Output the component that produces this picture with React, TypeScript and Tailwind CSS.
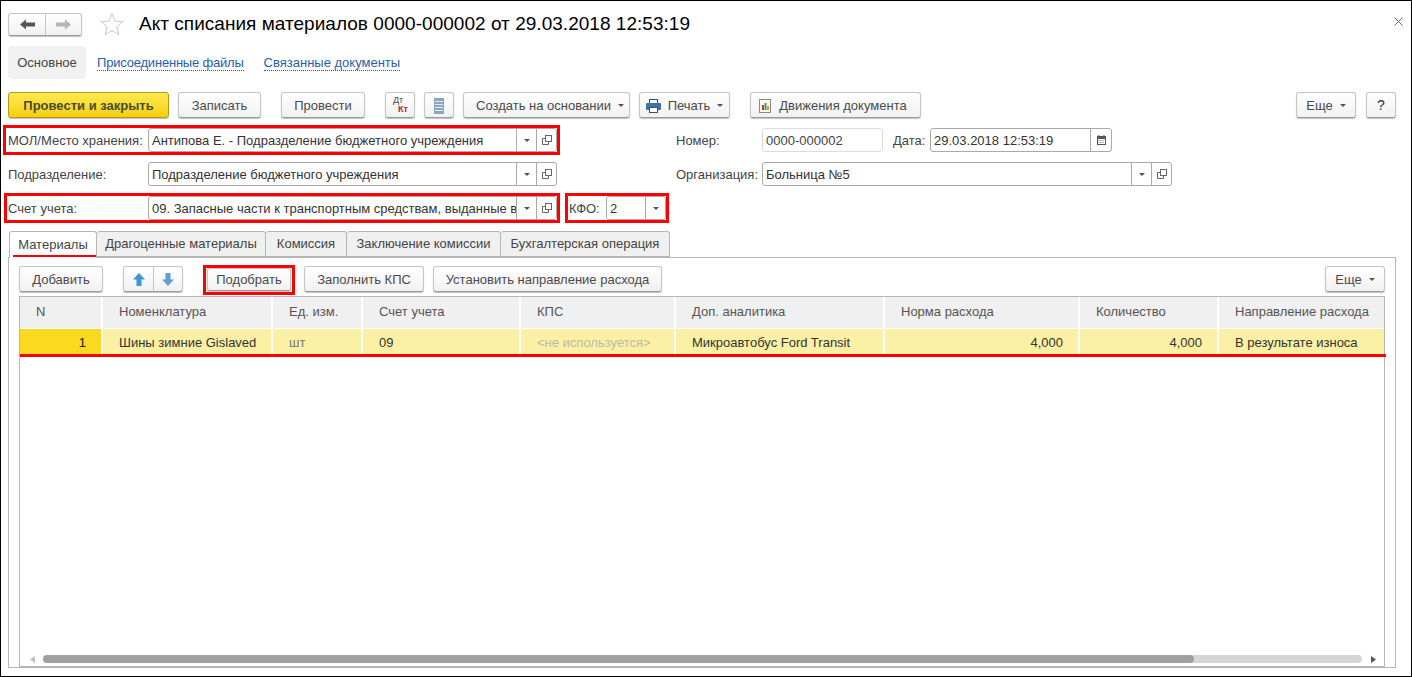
import React from "react";

const btnBase =
  "flex h-[26px] shrink-0 items-center justify-center rounded-[3px] border border-[#c4c4c4] border-b-[#9a9a9a] bg-gradient-to-b from-white to-[#f1f1f1] pt-[1px] text-[#4a4a4a] shadow-[0_1px_1px_rgba(0,0,0,0.25)]";

const Caret = ({ className = "" }: { className?: string }) => (
  <svg width="6" height="3" viewBox="0 0 6 3" className={className}>
    <path d="M0 0h6L3 3z" fill="#555" />
  </svg>
);

const OpenIcon = () => (
  <svg width="10" height="10" viewBox="0 0 10 10" fill="none" stroke="#666">
    <rect x="3.5" y="0.5" width="6" height="6" />
    <path d="M3.5 3.5H0.5V9.5H6.5V6.5" />
  </svg>
);

const CalendarIcon = () => (
  <svg width="9" height="10" viewBox="0 0 9 10">
    <rect x="0.5" y="1.5" width="8" height="8" fill="white" stroke="#555" />
    <rect x="0" y="1" width="9" height="3" fill="#555" />
    <path d="M2 0v2M7 0v2" stroke="#555" />
    <path d="M1.5 5.5h6M1.5 7.5h6" stroke="#777" strokeDasharray="1 1" />
  </svg>
);

const Field = ({
  text,
  className,
  caret = true,
  open = true,
  calendar = false,
}: {
  text: string;
  className: string;
  caret?: boolean;
  open?: boolean;
  calendar?: boolean;
}) => (
  <div className={`flex h-6 min-w-0 items-center rounded-[3px] border border-[#aaaaaa] bg-white ${className}`}>
    <span className="min-w-0 flex-1 overflow-hidden pl-[3px] pt-[1px] whitespace-nowrap text-[#333]">{text}</span>
    {calendar && (
      <div className="flex h-full w-[21px] shrink-0 items-center justify-center border-l border-[#aaaaaa]">
        <CalendarIcon />
      </div>
    )}
    {caret && (
      <div className="flex h-full w-[20px] shrink-0 items-center justify-center border-l border-[#aaaaaa]">
        <Caret />
      </div>
    )}
    {open && (
      <div className="flex h-full w-[20px] shrink-0 items-center justify-center border-l border-[#aaaaaa]">
        <OpenIcon />
      </div>
    )}
  </div>
);

const columns = [
  { title: "N", value: "1", width: "w-[83px]", head: "pl-[16px]", cell: "justify-end pr-[15px] bg-[#fbd91e] text-[#222]" },
  { title: "Номенклатура", value: "Шины зимние Gislaved", width: "w-[170px]", head: "pl-[16px]", cell: "pl-[16px]" },
  { title: "Ед. изм.", value: "шт", width: "w-[90px]", head: "pl-[16px]", cell: "pl-[16px] text-[#777]" },
  { title: "Счет учета", value: "09", width: "w-[158px]", head: "pl-[16px]", cell: "pl-[16px]" },
  { title: "КПС", value: "<не используется>", width: "w-[155px]", head: "pl-[16px]", cell: "pl-[16px] text-[#bbb9a8]" },
  { title: "Доп. аналитика", value: "Микроавтобус Ford Transit", width: "w-[209px]", head: "pl-[16px]", cell: "pl-[16px]" },
  { title: "Норма расхода", value: "4,000", width: "w-[195px]", head: "pl-[16px]", cell: "justify-end pr-[15px]" },
  { title: "Количество", value: "4,000", width: "w-[139px]", head: "pl-[16px]", cell: "justify-end pr-[15px]" },
  { title: "Направление расхода", value: "В результате износа", width: "flex-1", head: "pl-[16px]", cell: "pl-[16px]" },
];

const tabs = [
  { label: "Драгоценные материалы", width: "w-[169px]" },
  { label: "Комиссия", width: "w-[81px]" },
  { label: "Заключение комиссии", width: "w-[154px]" },
  { label: "Бухгалтерская операция", width: "w-[169px]" },
];

export default function App() {
  return (
    <div className="relative h-[677px] w-[1412px] overflow-hidden border border-black bg-white font-['Liberation_Sans',Arial,sans-serif] text-[13px] text-[#444]">
      {/* title row */}
      <div className="ml-[7px] mt-[11px] flex h-6 items-center">
        <div className={`${btnBase} !h-[23px] w-[74px] !justify-start !pt-0`}>
          <div className="flex h-full w-[37px] items-center justify-center border-r border-[#c4c4c4]">
            <svg width="15" height="11" viewBox="0 0 15 11">
              <path d="M0 5.5L6 0.5V3.5H15V7.5H6V10.5z" fill="#555" />
            </svg>
          </div>
          <div className="flex h-full flex-1 items-center justify-center">
            <svg width="15" height="11" viewBox="0 0 15 11">
              <path d="M15 5.5L9 0.5V3.5H0V7.5H9V10.5z" fill="#b5b5b5" />
            </svg>
          </div>
        </div>
        <svg width="24" height="24" viewBox="0 0 24 24" className="ml-[18px]">
          <path d="M12 1.5l3 7.6 8 .6-6.2 5.1 2 8-6.8-4.3-6.8 4.3 2-8L1 9.7l8-.6z" fill="white" stroke="#c9c9c9" />
        </svg>
        <h1 className="ml-[15px] pt-[1px] text-[19px] font-normal tracking-[0.03px] text-black">
          Акт списания материалов 0000-000002 от 29.03.2018 12:53:19
        </h1>
        <svg width="9" height="9" viewBox="0 0 9 9" className="ml-auto mr-[8px] -mt-[6px]" stroke="#666">
          <path d="M0.5 0.5l8 8M8.5 0.5l-8 8" />
        </svg>
      </div>

      {/* form sections */}
      <div className="ml-[7px] mt-[10px] flex h-[33px] items-center">
        <div className="flex h-full w-[78px] items-center justify-center rounded-[4px] bg-[#f1f1f1] pt-[1px]">Основное</div>
        <a className="ml-[11px] mt-[2px] border-b border-dotted border-[#1f5fb0] leading-[14px] tracking-[-0.2px] text-[#1f5fb0]">Присоединенные файлы</a>
        <a className="ml-[20px] mt-[2px] border-b border-dotted border-[#1f5fb0] leading-[14px] text-[#1f5fb0]">Связанные документы</a>
      </div>

      {/* command bar */}
      <div className="ml-[7px] mr-[15px] mt-[13px] flex items-center">
        <button className="flex h-[26px] w-[161px] items-center justify-center rounded-[3px] border border-[#b29b1c] bg-gradient-to-b from-[#ffe94d] to-[#f5d000] pt-[1px] font-bold text-[#4a4a2a] shadow-[0_1px_1px_rgba(0,0,0,0.25)]">
          Провести и закрыть
        </button>
        <button className={`${btnBase} ml-[9px] w-[83px]`}>Записать</button>
        <button className={`${btnBase} ml-[20px] w-[84px]`}>Провести</button>
        <button className={`${btnBase} relative ml-[20px] w-[30px]`}>
          <span className="absolute left-[7px] top-[3px] text-[9px] leading-[9px] text-[#3a4a5a]">Дт</span>
          <span className="absolute left-[12px] top-[12px] text-[9px] font-bold leading-[9px] text-[#c0231c]">Кт</span>
        </button>
        <button className={`${btnBase} ml-[9px] w-[30px]`}>
          <svg width="10" height="16" viewBox="0 0 10 16">
            <rect width="10" height="16" fill="#8aa5bd" />
            <path d="M1 3.5h8M1 6.5h8M1 9.5h8M1 12.5h8" stroke="#e4edf3" />
          </svg>
        </button>
        <button className={`${btnBase} ml-[9px] w-[167px] gap-[7px] pl-[7px]`}>
          Создать на основании
          <Caret />
        </button>
        <button className={`${btnBase} ml-[9px] w-[91px]`}>
          <svg width="15" height="14" viewBox="0 0 15 14" className="mr-[7px]">
            <rect x="3.5" y="0.5" width="8" height="4" fill="white" stroke="#2f5677" />
            <rect x="0" y="4" width="15" height="7" rx="1" fill="#3f73a8" />
            <rect x="3.5" y="8.5" width="8" height="5" fill="white" stroke="#2f5677" />
          </svg>
          Печать
          <Caret className="ml-[7px]" />
        </button>
        <button className={`${btnBase} ml-[20px] w-[171px] pr-[5px]`}>
          <svg width="12" height="14" viewBox="0 0 12 14" className="mr-[8px]">
            <rect x="0.5" y="0.5" width="11" height="13" fill="white" stroke="#888" />
            <rect x="3" y="6" width="2" height="5" fill="#c0392b" />
            <rect x="5.5" y="4" width="2" height="7" fill="#4a9a3c" />
            <rect x="8" y="7" width="2" height="4" fill="#d9a11f" />
          </svg>
          Движения документа
        </button>
        <button className={`${btnBase} ml-auto w-[60px] gap-[7px]`}>
          Еще
          <Caret />
        </button>
        <button className={`${btnBase} ml-[10px] w-[30px] text-[14px] text-[#333]`}>?</button>
      </div>

      {/* fields */}
      <div className="mt-[10px] flex h-6 items-center">
        <div className="ml-[5px] flex h-6 w-[551px] items-center pl-[2px] outline-3 outline-[#ff0000]">
          <span className="w-[140px] shrink-0 whitespace-nowrap pt-[1px]">МОЛ/Место хранения:</span>
          <Field text="Антипова Е. - Подразделение бюджетного учреждения" className="flex-1" />
        </div>
        <span className="ml-[119px] w-[86px] shrink-0 pt-[1px]">Номер:</span>
        <div className="flex h-6 w-[121px] items-center rounded-[3px] border border-[#dcdcdc] pl-[3px] pt-[1px]">0000-000002</div>
        <span className="ml-[10px] w-[37px] shrink-0 pt-[1px]">Дата:</span>
        <Field text="29.03.2018 12:53:19" className="w-[182px]" caret={false} open={false} calendar />
      </div>
      <div className="mt-[10px] flex h-6 items-center">
        <div className="ml-[7px] flex w-[549px] items-center">
          <span className="w-[140px] shrink-0 whitespace-nowrap pt-[1px]">Подразделение:</span>
          <Field text="Подразделение бюджетного учреждения" className="flex-1" />
        </div>
        <span className="ml-[119px] w-[86px] shrink-0 pt-[1px]">Организация:</span>
        <Field text="Больница №5" className="w-[410px]" />
      </div>
      <div className="mt-[10px] flex h-6 items-center">
        <div className="ml-[6px] flex h-6 w-[550px] items-center pl-[1px] outline-3 outline-[#ff0000]">
          <span className="w-[140px] shrink-0 whitespace-nowrap pt-[1px]">Счет учета:</span>
          <Field text="09. Запасные части к транспортным средствам, выданные в" className="flex-1" />
        </div>
        <div className="ml-[11px] flex h-6 w-[98px] items-center pl-[1px] outline-3 outline-[#ff0000]">
          <span className="w-[37px] shrink-0 pt-[1px]">КФО:</span>
          <Field text="2" className="flex-1" open={false} />
        </div>
      </div>

      {/* tabs */}
      <div className="ml-[8px] mt-[11px] flex h-[26px] items-stretch">
        <div className="relative z-10 flex h-[27px] w-[88px] items-center justify-center rounded-t-[3px] border border-b-0 border-[#b5b5b5] bg-white">
          Материалы
        </div>
        {tabs.map((tab) => (
          <div
            key={tab.label}
            className={`flex ${tab.width} items-center justify-center rounded-t-[3px] border border-l-0 border-[#b5b5b5] bg-[#f0f0f0]`}
          >
            {tab.label}
          </div>
        ))}
      </div>

      {/* panel */}
      <div className="relative ml-[7px] flex h-[411px] w-[1388px] flex-col border border-[#b5b5b5] px-[10px] pt-[8px]">
        <div className="flex h-[26px] items-start">
          <button className={`${btnBase} w-[84px]`}>Добавить</button>
          <div className={`${btnBase} ml-[20px] w-[60px] !justify-start !pt-0`}>
            <div className="flex h-full w-[30px] items-center justify-center border-r border-[#c4c4c4]">
              <svg width="12" height="13" viewBox="0 0 12 13">
                <path d="M6 0l6 6.5H8.5V13h-5V6.5H0z" fill="#3f95d6" />
              </svg>
            </div>
            <div className="flex h-full flex-1 items-center justify-center">
              <svg width="12" height="13" viewBox="0 0 12 13">
                <path d="M6 13L0 6.5h3.5V0h5v6.5H12z" fill="#5f9fd3" />
              </svg>
            </div>
          </div>
          <div className="ml-[20px] -mt-[1px] flex h-[30px] w-[92px] shrink-0 items-start justify-center border-[3px] border-[#ff0000]">
            <button className={`${btnBase} !h-[23px] w-[84px]`}>Подобрать</button>
          </div>
          <button className={`${btnBase} ml-[9px] w-[120px]`}>Заполнить КПС</button>
          <button className={`${btnBase} ml-[9px] w-[229px]`}>Установить направление расхода</button>
          <button className={`${btnBase} ml-auto w-[60px] gap-[7px]`}>
            Еще
            <Caret />
          </button>
        </div>

        <div className="relative mt-[4px] flex flex-1 flex-col border border-[#b5b5b5]">
          <div className="flex h-[31px] bg-[#f0f0f0]">
            {columns.map((col) => (
              <div key={col.title} className={`${col.width} ${col.head} flex items-center border-r-2 border-white pb-[1px] text-[#555] last:border-r-0`}>
                {col.title}
              </div>
            ))}
          </div>
          <div className="flex h-[27px] border-t border-white bg-[#fbf0a4] text-[#333]">
            {columns.map((col) => (
              <div key={col.title} className={`${col.width} ${col.cell} flex items-center border-r-2 border-white pt-[1px] whitespace-nowrap last:border-r-0`}>
                {col.value}
              </div>
            ))}
          </div>

          {/* horizontal scroll */}
          <div className="mb-[3px] mt-auto flex h-[8px] items-center pl-[10px] pr-[8px]">
            <svg width="5" height="7" viewBox="0 0 5 7" className="shrink-0">
              <path d="M5 0v7L0 3.5z" fill="#c0c0c0" />
            </svg>
            <div className="ml-[8px] h-[8px] flex-1 rounded-full bg-[#d6d6d6]">
              <div className="h-full w-[1151px] rounded-full bg-[#a0a0a0]" />
            </div>
            <svg width="5" height="7" viewBox="0 0 5 7" className="ml-[9px] shrink-0">
              <path d="M0 0v7l5-3.5z" fill="#555" />
            </svg>
          </div>
        </div>
      </div>

      {/* red annotation marks */}
      <div className="absolute left-[12px] top-[254px] z-20 h-[2px] w-[83px] bg-[#ff0000]" />
      <div className="absolute left-[19px] top-[353px] z-20 h-[3px] w-[1366px] bg-[#ff0000]" />
    </div>
  );
}
